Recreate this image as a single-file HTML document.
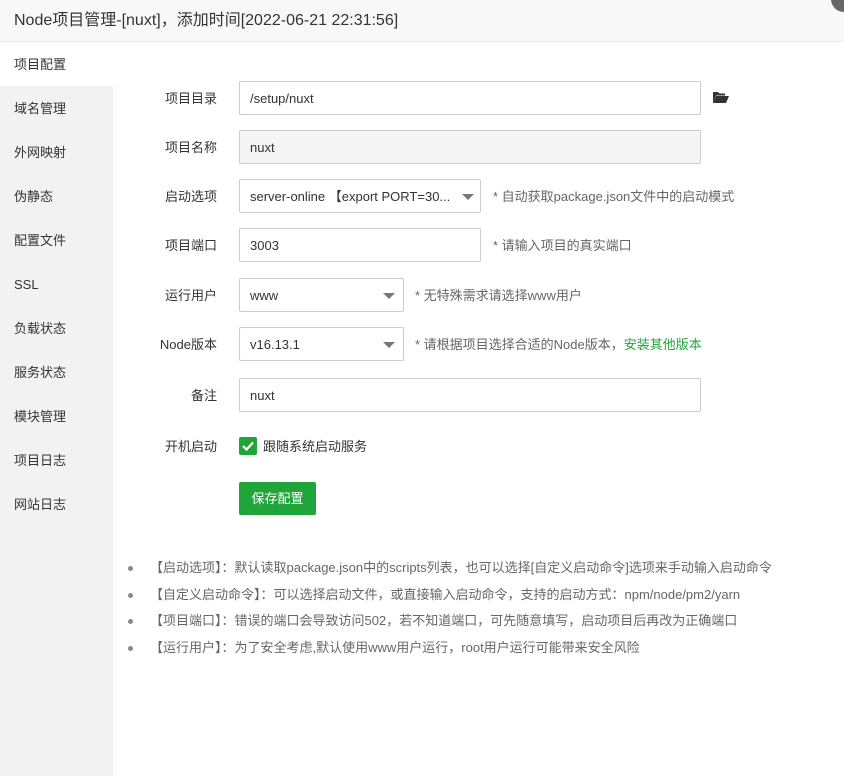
<!DOCTYPE html>
<html><head><meta charset="utf-8"><style>
*{margin:0;padding:0;box-sizing:border-box}
body{width:844px;height:776px;overflow:hidden;background:#fff;font-family:"Liberation Sans","Noto Sans CJK SC",sans-serif;color:#333;position:relative}
.hd{position:absolute;left:0;top:0;width:844px;height:42px;background:#f8f8f8;border-bottom:1px solid #e8e8e8;font-size:16px;line-height:41px;padding-left:14px;color:#333}
.close{position:absolute;left:831px;top:-14px;width:26px;height:26px;border-radius:50%;background:#666}
.sb{position:absolute;left:0;top:42px;width:113px;height:734px;background:#f2f2f2}
.sb div{height:44px;line-height:45px;padding-left:14px;font-size:13px;color:#333}
.sb div.on{background:#fff}
.lab{position:absolute;right:627px;width:100px;text-align:right;font-size:13px;line-height:35px}
.inp{position:absolute;left:239px;height:34px;border:1px solid #ccc;border-radius:2px;font-size:13px;line-height:33px;padding-left:10px;background:#fff;white-space:nowrap;overflow:hidden}
.dis{background:#f5f5f5}
.arr{position:absolute;right:8px;top:14px;width:0;height:0;border-left:6px solid transparent;border-right:6px solid transparent;border-top:6px solid #777}
.tip{position:absolute;font-size:13px;color:#666;line-height:35px;white-space:nowrap}
.notes{position:absolute;left:128px;top:557px;font-size:13px;color:#666}
.notes div{height:26.5px;line-height:22px;position:relative;padding-left:22px;white-space:nowrap}
.notes div:before{content:"";position:absolute;left:0;top:9px;width:5px;height:5px;border-radius:50%;background:#888}
</style></head><body>
<div class="hd">Node项目管理-[nuxt]，添加时间[2022-06-21 22:31:56]</div>
<div class="close"></div>
<div class="sb">
<div class="on">项目配置</div><div>域名管理</div><div>外网映射</div><div>伪静态</div><div>配置文件</div><div>SSL</div><div>负载状态</div><div>服务状态</div><div>模块管理</div><div>项目日志</div><div>网站日志</div>
</div>

<div class="lab" style="top:81px">项目目录</div>
<div class="inp" style="top:81px;width:462px">/setup/nuxt</div>
<svg style="position:absolute;left:712px;top:91px" width="17" height="13" viewBox="0 0 17 13"><path d="M1 1h5l1.5 1.5H13v2H4L1 12z" fill="#333"/><path d="M4 5h13l-3 7H1z" fill="#333"/></svg>

<div class="lab" style="top:130px">项目名称</div>
<div class="inp dis" style="top:130px;width:462px">nuxt</div>

<div class="lab" style="top:179px">启动选项</div>
<div class="inp" style="top:179px;width:242px">server-online 【export PORT=30...<span class="arr" style="top:14px;right:6px"></span></div>
<div class="tip" style="left:493px;top:179px">* 自动获取package.json文件中的启动模式</div>

<div class="lab" style="top:228px">项目端口</div>
<div class="inp" style="top:228px;width:242px">3003</div>
<div class="tip" style="left:493px;top:228px">* 请输入项目的真实端口</div>

<div class="lab" style="top:278px">运行用户</div>
<div class="inp" style="top:278px;width:165px">www<span class="arr"></span></div>
<div class="tip" style="left:415px;top:278px">* 无特殊需求请选择www用户</div>

<div class="lab" style="top:327px">Node版本</div>
<div class="inp" style="top:327px;width:165px">v16.13.1<span class="arr"></span></div>
<div class="tip" style="left:415px;top:327px">* 请根据项目选择合适的Node版本，<span style="color:#20a53a">安装其他版本</span></div>

<div class="lab" style="top:378px">备注</div>
<div class="inp" style="top:378px;width:462px">nuxt</div>

<div class="lab" style="top:429px">开机启动</div>
<div style="position:absolute;left:239px;top:437px;width:18px;height:18px;background:#20a53a;border-radius:2px"><svg width="18" height="18" viewBox="0 0 18 18"><path d="M4 9l3.5 3.5L14 5.5" stroke="#fff" stroke-width="2.2" fill="none"/></svg></div>
<div class="tip" style="left:263px;top:429px;color:#333">跟随系统启动服务</div>

<div style="position:absolute;left:239px;top:482px;width:77px;height:33px;background:#20a53a;border-radius:2px;color:#fff;font-size:13px;line-height:33px;text-align:center">保存配置</div>

<div class="notes">
<div>【启动选项】：默认读取package.json中的scripts列表，也可以选择[自定义启动命令]选项来手动输入启动命令</div>
<div>【自定义启动命令】：可以选择启动文件，或直接输入启动命令，支持的启动方式：npm/node/pm2/yarn</div>
<div>【项目端口】：错误的端口会导致访问502，若不知道端口，可先随意填写，启动项目后再改为正确端口</div>
<div>【运行用户】：为了安全考虑,默认使用www用户运行，root用户运行可能带来安全风险</div>
</div>
</body></html>
